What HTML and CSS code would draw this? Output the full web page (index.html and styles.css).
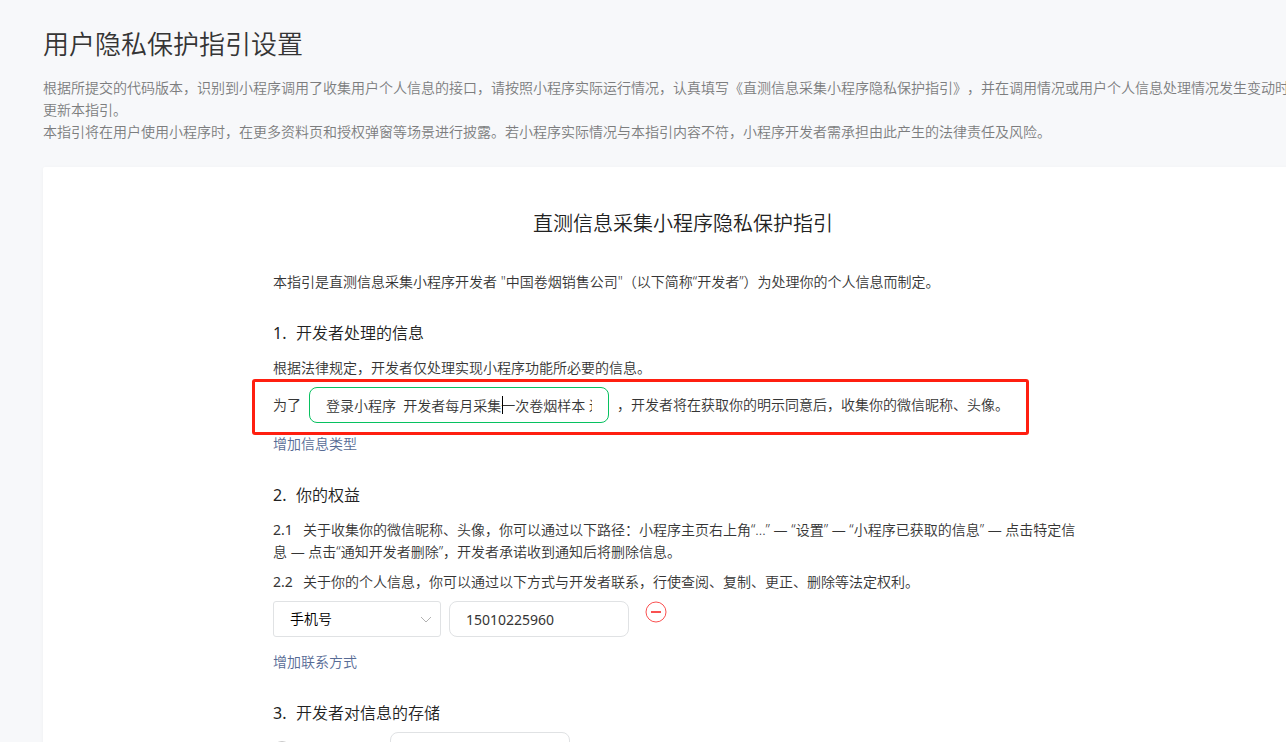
FILE: index.html
```html
<!DOCTYPE html>
<html lang="zh-CN">
<head>
    <meta charset="UTF-8">
    <meta name="viewport" content="width=device-width, initial-scale=1.0">
    <title>用户隐私保护指引设置</title>
    <link rel="stylesheet" href="styles.css">
</head>
<body>
    <main class="page">
        <h1 class="page-title">用户隐私保护指引设置</h1>
        <div class="page-desc">
            <p>根据所提交的代码版本，识别到小程序调用了收集用户个人信息的接口，请按照小程序实际运行情况，认真填写《直测信息采集小程序隐私保护指引》，并在调用情况或用户个人信息处理情况发生变动时<br>更新本指引。</p>
            <p>本指引将在用户使用小程序时，在更多资料页和授权弹窗等场景进行披露。若小程序实际情况与本指引内容不符，小程序开发者需承担由此产生的法律责任及风险。</p>
        </div>

        <form class="card">
            <h2 class="card-title">直测信息采集小程序隐私保护指引</h2>
            <div class="guide">
                <p class="intro">本指引是直测信息采集小程序开发者 "中国卷烟销售公司"（以下简称“开发者”）为处理你的个人信息而制定。</p>

                <section class="section">
                    <h3><span class="num">1.</span>开发者处理的信息</h3>
                    <p>根据法律规定，开发者仅处理实现小程序功能所必要的信息。</p>
                    <div class="row highlight">
                        <label for="purpose">为了</label>
                        <div class="field">
                            <input type="text" id="purpose" class="input input-active" value="登录小程序&nbsp; 开发者每月采集一次卷烟样本 进行检测">
                            <span class="caret"></span>
                        </div>
                        <span>，开发者将在获取你的明示同意后，收集你的微信昵称、头像。</span>
                    </div>
                    <a href="#" class="add-link add-info">增加信息类型</a>
                </section>

                <section class="section">
                    <h3><span class="num">2.</span>你的权益</h3>
                    <p><span class="sub-num">2.1</span>关于收集你的微信昵称、头像，你可以通过以下路径：小程序主页右上角“...” — “设置” — “小程序已获取的信息” — 点击特定信息 — 点击“通知开发者删除”，开发者承诺收到通知后将删除信息。</p>
                    <p><span class="sub-num">2.2</span>关于你的个人信息，你可以通过以下方式与开发者联系，行使查阅、复制、更正、删除等法定权利。</p>
                    <div class="row contact">
                        <div class="select-wrap">
                            <select class="select" aria-label="联系方式">
                                <option>手机号</option>
                            </select>
                            <svg class="arrow" width="12" height="8" viewBox="0 0 12 8" fill="none" stroke="#b2b2b2"><path d="M1 1l5 5 5-5"/></svg>
                        </div>
                        <input type="text" class="input input-short" value="15010225960" aria-label="手机号">
                        <button type="button" class="remove" aria-label="删除">
                            <svg width="22" height="22" viewBox="0 0 22 22" fill="none" stroke="#fa5151"><circle cx="11" cy="11" r="10"/><path d="M6 11h10" stroke-width="2"/></svg>
                        </button>
                    </div>
                    <a href="#" class="add-link add-contact">增加联系方式</a>
                </section>

                <section class="section">
                    <h3 class="storage-title"><span class="num">3.</span>开发者对信息的存储</h3>
                    <div class="row storage">
                        <input type="radio" name="storage" class="radio" aria-label="固定存储期限">
                        <input type="text" class="input input-short" aria-label="存储期限">
                    </div>
                </section>
            </div>
        </form>
    </main>
</body>
</html>
```

FILE: styles.css
```css
*,
*::after {
    box-sizing: border-box;
}
body {
    height: 100vh;
    margin: 0;
    overflow: hidden;
    background-color: #f7f8fa;
    color: #353535;
    font-family: "Noto Sans", "Noto Sans CJK SC", sans-serif;
    font-size: 14px;
    font-weight: 350;
    line-height: 22px;
    text-spacing-trim: space-all;
}
h1, h2, h3, p {
    margin: 0;
    font-weight: 350;
}
.page {
    min-width: 1366px;
    padding: 26px 43px 0;
}
.page-title {
    font-size: 26px;
    line-height: 36px;
}
.page-desc {
    margin: 15px 0 24px;
    color: #7c7d7e;
}
.card {
    padding: 43px 0;
    background-color: #fff;
    border-radius: 2px;
    box-shadow: 0 1px 4px rgba(0,0,0,0.04);
}
.card-title {
    font-size: 20px;
    line-height: 28px;
    text-align: center;
    color: #222;
}
.guide {
    width: 820px;
    margin: 33px auto 0;
}
.section {
    margin-top: 28px;
}
.section h3 {
    margin-bottom: 12px;
    font-size: 16px;
    line-height: 24px;
    color: #222;
}
.section p {
    margin-bottom: 8px;
    padding-right: 8px;
}
.num,
.sub-num {
    display: inline-block;
    font-weight: 400;
}
.num {
    width: 23px;
}
.sub-num {
    width: 30px;
}
.row {
    display: flex;
    align-items: center;
    gap: 8px;
    white-space: nowrap;
}

/* form controls */
.input,
.select {
    display: block;
    height: 36px;
    padding: 0 16px;
    border: 1px solid #e0e2e4;
    border-radius: 8px;
    outline: none;
    background-color: #fff;
    color: #353535;
    font: inherit;
}
.input-active {
    width: 300px;
    border-color: #07c160;
}
.input-short {
    width: 180px;
    font-weight: 400;
}
.field,
.select-wrap {
    position: relative;
}
.caret {
    position: absolute;
    top: 9px;
    left: 193px;
    width: 1px;
    height: 18px;
    background-color: #000;
}
.select {
    width: 168px;
    border-radius: 3px;
    color: #000;
    appearance: none;
}
.arrow {
    position: absolute;
    top: 15px;
    right: 9px;
    pointer-events: none;
}
.remove {
    align-self: flex-start;
    width: 22px;
    height: 22px;
    margin-left: 8px;
    padding: 0;
    border: none;
    background: none;
    cursor: pointer;
}
.remove svg {
    display: block;
}

/* red frame around the purpose row */
.highlight {
    position: relative;
}
.highlight::after {
    content: "";
    position: absolute;
    top: -8px;
    left: -21px;
    width: 777px;
    height: 56px;
    border: 3px solid #ff1f10;
    border-radius: 3px;
    pointer-events: none;
}

.add-link {
    display: block;
    width: max-content;
    color: #576b95;
    text-decoration: none;
}
.add-info {
    margin-top: 10px;
}
.add-contact {
    margin-top: 14px;
}
.section .storage-title {
    margin-bottom: 7px;
}
.radio {
    appearance: none;
    width: 18px;
    height: 18px;
    margin: 0 91px 0 0;
    border: 1px solid #c8c8c8;
    border-radius: 50%;
}
```
